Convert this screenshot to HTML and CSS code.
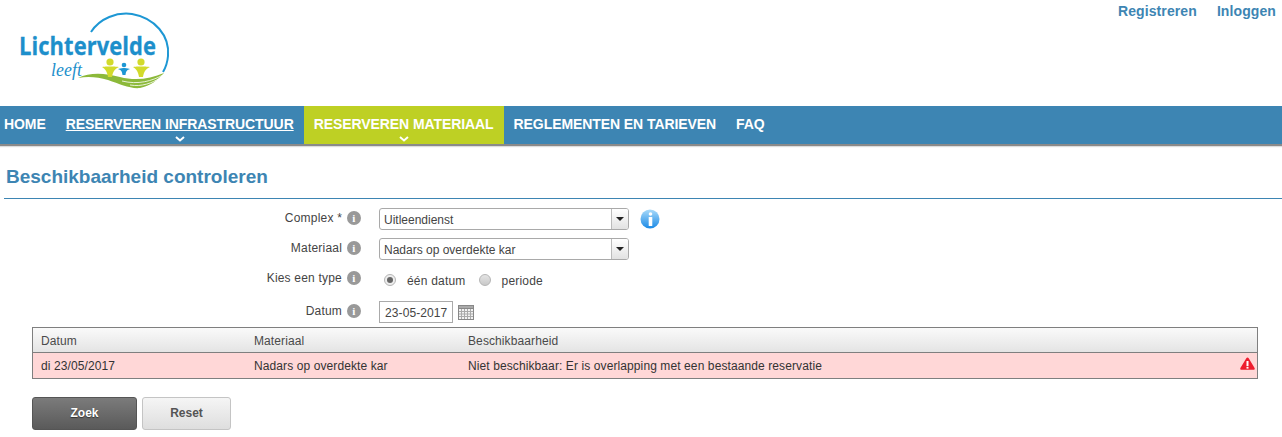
FILE: index.html
```html
<!DOCTYPE html>
<html lang="nl">
<head>
<meta charset="utf-8">
<title>Beschikbaarheid controleren</title>
<link rel="stylesheet" href="styles.css">
</head>
<body>
<header class="top">
  <svg class="logo" width="200" height="100" viewBox="0 0 200 100">
    <path d="M91 32C100 18 117 12 132 14C155 18 170 36 168 56C167.500 62 166 67 163 72" fill="none" stroke="#1d97d4" stroke-width="2"/>
    <text x="19" y="55" class="logo-name" textLength="137" lengthAdjust="spacingAndGlyphs">Lichtervelde</text>
    <text x="51" y="76" class="logo-sub" textLength="31" lengthAdjust="spacingAndGlyphs">leeft</text>
    <path d="M78 78C90 72 105 73 120 77C135 81 150 79 164 73C158 80 150 86 140 88C130 89 120 84 108 80C98 77 88 76 78 78Z" fill="#8cb93a"/>
    <path d="M122 81C138 85 152 81 163 75M130 85C142 87 152 83 160 78" fill="none" stroke="#fff" stroke-width="0.800"/>
    <g fill="#d2da2b">
      <circle cx="110" cy="62" r="3.600"/><path d="M102 67C106 66 108 66.500 110 66.500C112 66.500 114 66 119 67C115 69 113 71 112 77H108C107 71 105 69 102 67Z"/>
      <circle cx="141" cy="62" r="3.600"/><path d="M133 67C137 66 139 66.500 141 66.500C143 66.500 145 66 150 67C146 69 144 71 143 77H139C138 71 136 69 133 67Z"/>
    </g>
    <g fill="#1d97d4">
      <circle cx="124" cy="65" r="2.300"/><path d="M118 69C121 68 123 68 124 68C125 68 127 68 130 69C127 70 126 71 125.500 75H122.500C122 71 121 70 118 69Z"/>
    </g>
  </svg>
  <div class="account">
    <a class="account-link" href="#">Registreren</a>
    <a class="account-link" href="#">Inloggen</a>
  </div>
</header>

<nav class="nav">
  <a class="nav-item" href="#">HOME</a>
  <a class="nav-item nav-current has-sub" href="#"><span class="nav-u">RESERVEREN INFRASTRUCTUUR</span>
    <svg class="chev" width="10" height="6" viewBox="0 0 10 6"><path d="M1 1L5 4.500L9 1" fill="none" stroke="#fff" stroke-width="2"/></svg>
  </a>
  <a class="nav-item nav-active has-sub" href="#">RESERVEREN MATERIAAL
    <svg class="chev" width="10" height="6" viewBox="0 0 10 6"><path d="M1 1L5 4.500L9 1" fill="none" stroke="#fff" stroke-width="2"/></svg>
  </a>
  <a class="nav-item" href="#">REGLEMENTEN EN TARIEVEN</a>
  <a class="nav-item" href="#">FAQ</a>
</nav>

<main class="main">
  <h1 class="title">Beschikbaarheid controleren</h1>

  <form class="form">
    <div class="row row-select">
      <div class="label"><span>Complex *</span><span class="tip">i</span></div>
      <div class="select"><span class="select-text">Uitleendienst</span><span class="select-btn"><i class="caret"></i></span></div>
      <svg class="info" width="20" height="20" viewBox="0 0 20 20">
        <defs><linearGradient id="ib" x1="0" y1="0" x2="0" y2="1"><stop offset="0" stop-color="#a8dafa"/><stop offset="1" stop-color="#1b8ae6"/></linearGradient></defs>
        <circle cx="10" cy="10" r="9.500" fill="url(#ib)"/>
        <circle cx="10.500" cy="5" r="1.800" fill="#fff"/>
        <rect x="8.700" y="8" width="3.600" height="9" rx="0.600" fill="#fff"/>
      </svg>
    </div>
    <div class="row row-select">
      <div class="label"><span>Materiaal</span><span class="tip">i</span></div>
      <div class="select"><span class="select-text">Nadars op overdekte kar</span><span class="select-btn"><i class="caret"></i></span></div>
    </div>
    <div class="row row-type">
      <div class="label"><span>Kies een type</span><span class="tip">i</span></div>
      <div class="radios">
        <span class="radio radio-on"></span><span class="radio-text">één datum</span>
        <span class="radio"></span><span class="radio-text">periode</span>
      </div>
    </div>
    <div class="row row-date">
      <div class="label"><span>Datum</span><span class="tip">i</span></div>
      <div class="date">23-05-2017</div>
      <svg class="cal" width="16" height="15" viewBox="0 0 16 15">
        <rect x="0.500" y="0.500" width="15" height="14" fill="#f2f2f2" stroke="#888"/>
        <rect x="0.500" y="0.500" width="15" height="3" fill="#aaa" stroke="#888"/>
        <path d="M3.500 4V14M6.500 4V14M9.500 4V14M12.500 4V14M1 6.500H15M1 9H15M1 11.500H15" stroke="#aaa" stroke-width="1" fill="none"/>
      </svg>
    </div>
  </form>

  <div class="result">
    <div class="result-row result-head">
      <span class="col-date">Datum</span><span class="col-mat">Materiaal</span><span>Beschikbaarheid</span>
    </div>
    <div class="result-row result-bad">
      <span class="col-date">di 23/05/2017</span><span class="col-mat">Nadars op overdekte kar</span><span>Niet beschikbaar: Er is overlapping met een bestaande reservatie</span>
      <svg class="warn" width="15" height="13" viewBox="0 0 15 13">
        <path d="M7.500 0.500C8 0.500 8.400 0.800 8.700 1.300L14.600 11C15 11.800 14.600 12.800 13.600 12.800H1.400C0.400 12.800 0 11.800 0.400 11L6.300 1.300C6.600 0.800 7 0.500 7.500 0.500Z" fill="#ee1c2e"/>
        <rect x="6.500" y="4" width="2" height="5" fill="#fff"/><rect x="6.500" y="9.800" width="2" height="1.800" fill="#fff"/>
      </svg>
    </div>
  </div>

  <div class="actions">
    <button class="btn btn-dark" type="button">Zoek</button>
    <button class="btn btn-light" type="button">Reset</button>
  </div>
</main>
</body>
</html>
```
FILE: styles.css
```css
* { box-sizing: border-box; }
html, body { margin: 0; padding: 0; }
body {
  font-family: "Liberation Sans", Arial, sans-serif;
  font-size: 12px;
  letter-spacing: 0.100px;
  color: #444;
  background: #fff;
  height: 437px;
  overflow: hidden;
}
a { text-decoration: none; }

.top {
  height: 106px;
  display: flex;
  justify-content: space-between;
  align-items: flex-start;
}
.logo { display: block; }
.logo-name { font-family: "Open Sans", sans-serif; font-weight: 700; font-size: 25px; fill: #1d8fcb; stroke: #1d8fcb; stroke-width: 0.300px; }
.logo-sub { font-family: "Liberation Serif", serif; font-style: italic; font-size: 18px; fill: #1d8fcb; }
.account { display: flex; gap: 20px; padding: 3px 6px 0 0; }
.account-link { font-size: 14px; letter-spacing: 0.100px; font-weight: 700; color: #3d85b3; line-height: 17px; }

.nav {
  height: 40px;
  display: flex;
  background: #3d85b3;
  border-bottom: 2px solid #8a8a8a;
  box-shadow: 0 1px 1px #ddd;
}
.nav-item {
  position: relative;
  height: 38px;
  padding: 10px 10px 0;
  font-size: 14px;
  line-height: 16px;
  font-weight: 700;
  letter-spacing: -0.080px;
  color: #fff;
}
.nav-item:first-child { padding-left: 4px; }
.nav-u { text-decoration: underline; }
.nav-active { background: #bed024; }
.chev { position: absolute; left: 50%; bottom: 2px; margin-left: -5px; }

.main { padding: 0 0 0 4px; }
.title {
  margin: 0 0 9px;
  height: 53px;
  padding: 20px 0 0 2px;
  font-size: 19px;
  line-height: 22px;
  letter-spacing: 0;
  font-weight: 700;
  color: #3d85b3;
  border-bottom: 1px solid #3d85b3;
}

.form { display: flex; flex-direction: column; }
.row { display: flex; align-items: center; }
.row-select { height: 22px; margin-bottom: 8px; }
.row-type { height: 21px; margin-bottom: 12px; }
.row-date { height: 22px; margin-bottom: 4px; }

.label {
  width: 375px;
  padding-right: 18px;
  flex: none;
  display: flex;
  justify-content: flex-end;
  align-items: center;
  gap: 5px;
  margin-top: -2px;
  letter-spacing: 0.200px;
}
.tip {
  width: 14px;
  height: 14px;
  flex: none;
  border-radius: 50%;
  background: #999;
  color: #fff;
  font: 700 11px/14px "Liberation Serif", serif;
  text-align: center;
}
.select {
  width: 250px;
  height: 22px;
  display: flex;
  border: 1px solid #a9a9a9;
  border-radius: 3px;
  background: #fff;
}
.select-text { flex: 1; padding-left: 4px; line-height: 22px; letter-spacing: 0; }
.select-btn {
  width: 17px;
  border-left: 1px solid #bbb;
  background: linear-gradient(#fff, #e2e2e2);
  display: flex;
  align-items: center;
  justify-content: center;
  border-radius: 0 2px 2px 0;
}
.caret { width: 0; height: 0; border: 4px solid transparent; border-top: 4px solid #222; border-bottom: 0; }
.info { margin-left: 11px; flex: none; }

.radios { display: flex; align-items: center; height: 21px; padding-left: 5px; margin-top: 3px; }
.radio {
  width: 12px;
  height: 12px;
  border-radius: 50%;
  border: 1px solid #b5b5b5;
  background: linear-gradient(#e4e4e4, #c9c9c9);
  position: relative;
}
.radio-on { background: #eee; }
.radio-on::after {
  content: "";
  position: absolute;
  left: 2px;
  top: 2px;
  width: 6px;
  height: 6px;
  border-radius: 50%;
  background: #666;
}
.radio-text { margin: 2px 13px 0 11px; letter-spacing: 0.200px; }

.date {
  width: 74px;
  height: 22px;
  border: 1px solid #aaa;
  padding-left: 5px;
  line-height: 23px;
}
.cal { margin-left: 5px; flex: none; }

.result {
  margin-left: 28px;
  width: 1226px;
  border: 1px solid #7f7f7f;
}
.result-row { display: flex; align-items: center; padding-left: 8px; position: relative; }
.result-head {
  height: 25px;
  padding-top: 1px;
  background: linear-gradient(#fafafa, #e4e4e4);
  border-bottom: 1px solid #7f7f7f;
  color: #4a4a4a;
}
.result-bad { height: 25px; background: #ffd7d7; color: #333; }
.col-date { width: 213px; flex: none; }
.col-mat { width: 214px; flex: none; }
.warn { position: absolute; right: 2px; top: 4px; }

.actions { margin: 18px 0 0 28px; display: flex; gap: 5px; }
.btn {
  height: 33px;
  padding: 0 0 2px;
  border-radius: 3px;
  font: 700 12px "Liberation Sans", sans-serif;
  cursor: pointer;
}
.btn-dark {
  width: 105px;
  color: #fff;
  background: linear-gradient(#7b7b7b, #5a5a5a);
  border: 1px solid #555;
  text-shadow: 0 1px 1px #333;
}
.btn-light {
  width: 89px;
  color: #555;
  background: linear-gradient(#f5f5f5, #dedede);
  border: 1px solid #c4c4c4;
}
```
